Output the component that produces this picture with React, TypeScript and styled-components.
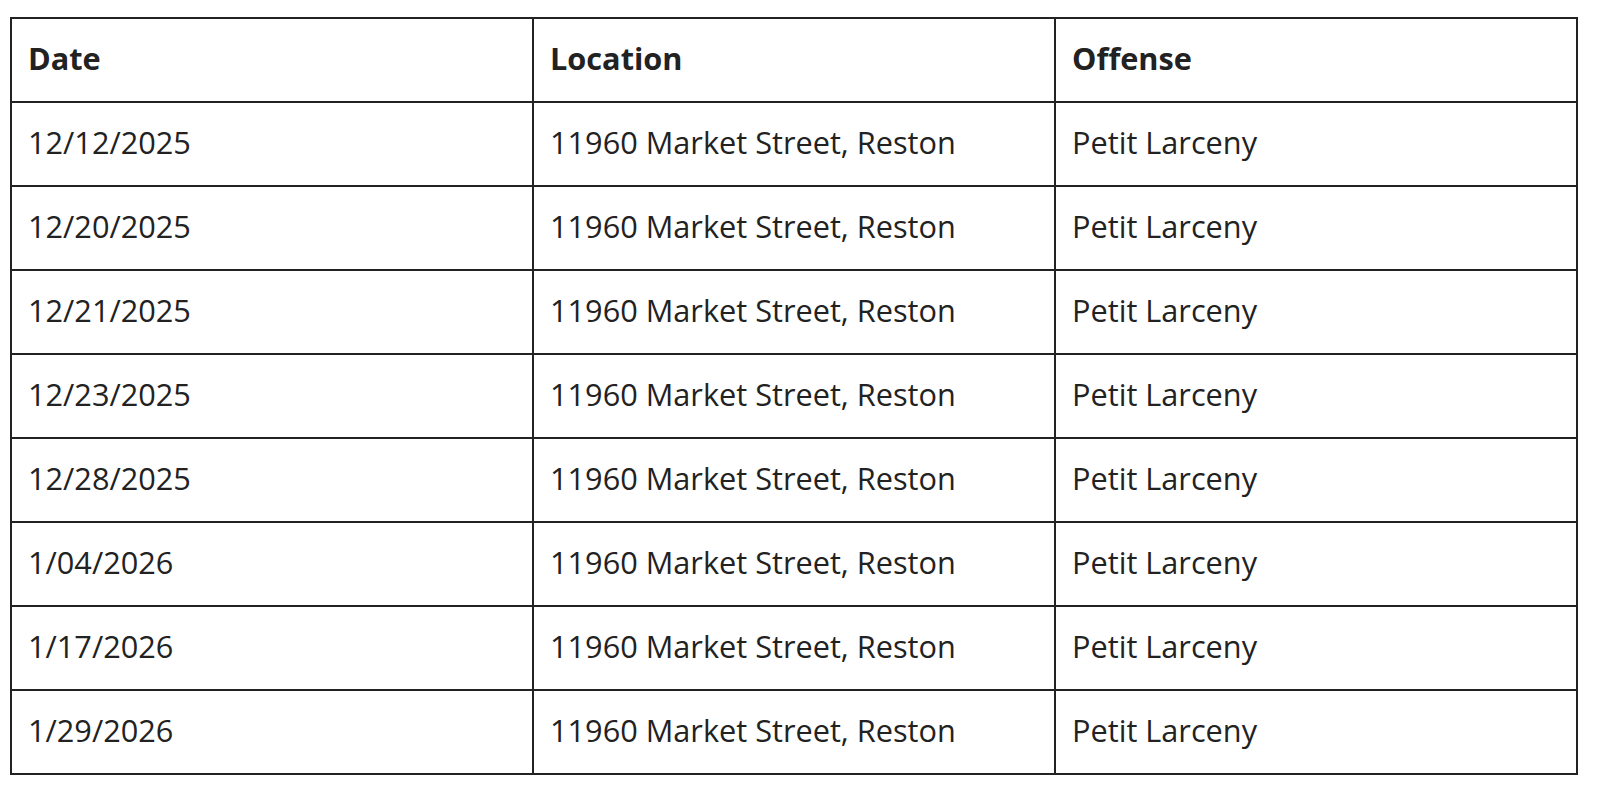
import styled, { createGlobalStyle } from 'styled-components';

const GlobalStyle = createGlobalStyle`
  body {
    margin: 0;
    background: #fff;
    font-family: "Open Sans", "Noto Sans", sans-serif;
    color: #222;
  }
`;

const Page = styled.div`
  padding: 17px 20px 15px 10px;
`;

const Table = styled.table`
  width: 1568px;
  table-layout: fixed;
  border-collapse: separate;
  border-spacing: 0;
  border-top: 2px solid #222;
  border-left: 2px solid #222;
`;

const Row = styled.tr`
  height: 84px;
`;

const Cell = styled.td<{ $head?: boolean }>`
  padding: 0 16px 4px;
  border-right: 2px solid #222;
  border-bottom: 2px solid #222;
  text-align: left;
  vertical-align: middle;
  font-size: 30.7px;
  font-weight: ${({ $head }) => ($head ? 700 : 400)};
  white-space: nowrap;
`;

const rows = [
  '12/12/2025',
  '12/20/2025',
  '12/21/2025',
  '12/23/2025',
  '12/28/2025',
  '1/04/2026',
  '1/17/2026',
  '1/29/2026',
];

export default function App() {
  return (
    <Page>
      <GlobalStyle />
      <Table>
        <thead>
          <Row>
            <Cell as="th" $head>Date</Cell>
            <Cell as="th" $head>Location</Cell>
            <Cell as="th" $head>Offense</Cell>
          </Row>
        </thead>
        <tbody>
          {rows.map((date) => (
            <Row key={date}>
              <Cell>{date}</Cell>
              <Cell>11960 Market Street, Reston</Cell>
              <Cell>Petit Larceny</Cell>
            </Row>
          ))}
        </tbody>
      </Table>
    </Page>
  );
}
